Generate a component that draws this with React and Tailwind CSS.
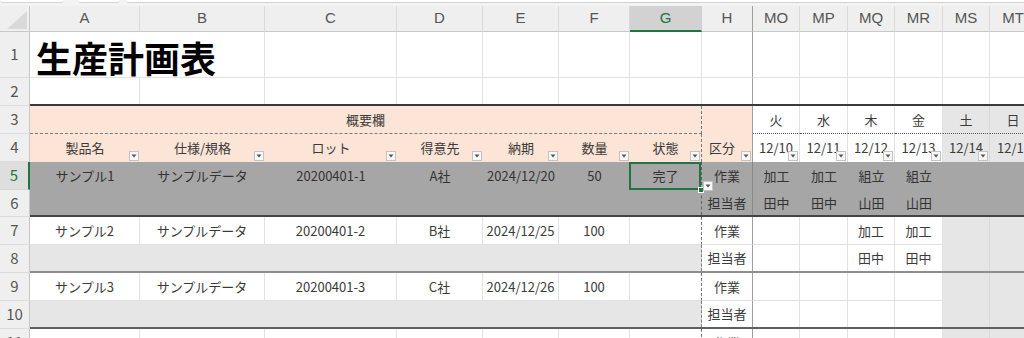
import React from "react";

// column widths, in sheet order
const W = {
  A: "w-[110px]",
  B: "w-[125px]",
  C: "w-[132px]",
  D: "w-[86px]",
  E: "w-[76px]",
  F: "w-[71px]",
  G: "w-[72px]",
  H: "w-[51px]",
  MO: "w-[47px]",
  MP: "w-[48px]",
  MQ: "w-[47px]",
  MR: "w-[48px]",
  MS: "w-[47px]",
  MT: "w-[47px]",
};

const LEFT = ["A", "B", "C", "D", "E", "F"];
const DAYS = ["MO", "MP", "MQ", "MR"];
const WEEKEND = ["MS", "MT"];

function Flt({ className = "right-[1px] bottom-[1px]" }) {
  return (
    <span
      className={`absolute z-20 flex h-[10px] w-[10px] items-center justify-center border border-[#c3c3c3] bg-[#f8f8f8] ${className}`}>
      <svg width="6" height="4" viewBox="0 0 6 4">
        <path d="M0.5 0.5h5L3 3.5z" fill="#555" />
      </svg>
    </span>
  );
}

function Cell({ col, className = "", children, flt }) {
  return (
    <div
      className={`relative flex h-full shrink-0 items-center justify-center whitespace-nowrap ${W[col]} ${className}`}>
      {children}
      {flt && <Flt />}
    </div>
  );
}

function RowNum({ n, active }) {
  return (
    <div
      className={
        active
          ? "flex w-[30px] shrink-0 items-center justify-center border-r-2 border-b border-r-[#217346] border-b-[#d6d6d6] bg-[#dedede] text-[15px] text-[#217346]"
          : "flex w-[30px] shrink-0 items-center justify-center border-r border-b border-r-[#c8c8c8] border-b-[#dcdcdc] bg-[#efefef] text-[15px] text-[#555]"
      }>
      {n}
    </div>
  );
}

function Row({ n, active, h = "h-[28px]", line = "", children }) {
  return (
    <div className={`flex ${h}`}>
      <RowNum n={n} active={active} />
      <div className={`flex min-w-0 flex-1 ${line}`}>{children}</div>
    </div>
  );
}

const grid = "border-r border-b border-[#e2e2e2]";
const gEdge = "border-r border-b border-b-[#e2e2e2] border-r-[#7a7a7a] [border-right-style:dashed]";
const hEdge = "border-r border-b border-b-[#e2e2e2] border-r-[#9e9e9e]";

function BlankRow({ n, h, line, title }) {
  return (
    <Row n={n} h={h} line={line}>
      {LEFT.map((c) =>
        c === "A" && title ? (
          <Cell key={c} col={c} className="z-10 items-end justify-start border-b border-[#e2e2e2] pb-[2px] pl-[6px]">
            <span className="text-[36px] leading-[36px] font-bold text-black">{title}</span>
          </Cell>
        ) : (
          <Cell key={c} col={c} className={line ? "border-r border-[#e2e2e2]" : grid} />
        )
      )}
      <Cell col="G" className={line ? "border-r border-[#e2e2e2]" : grid} />
      <Cell col="H" className={line ? "border-r border-[#9e9e9e]" : "border-r border-b border-b-[#e2e2e2] border-r-[#9e9e9e]"} />
      {[...DAYS, ...WEEKEND].map((c) => (
        <Cell key={c} col={c} className={line ? "border-r border-[#e2e2e2]" : grid} />
      ))}
    </Row>
  );
}

function DataPair({ n, vals, work, staff, line }) {
  return (
    <>
      <Row n={n}>
        {LEFT.map((c, i) => (
          <Cell key={c} col={c} className={grid}>
            {vals[i]}
          </Cell>
        ))}
        <Cell col="G" className={gEdge} />
        <Cell col="H" className={hEdge}>作業</Cell>
        {DAYS.map((c, i) => (
          <Cell key={c} col={c} className={grid}>
            {work[i]}
          </Cell>
        ))}
        {WEEKEND.map((c) => (
          <Cell key={c} col={c} className="border-r border-[#d8d8d8] bg-[#e7e6e6]" />
        ))}
      </Row>
      <Row n={n + 1} line={line}>
        {LEFT.map((c) => (
          <Cell key={c} col={c} className="bg-[#e7e6e6]" />
        ))}
        <Cell col="G" className="border-r border-[#7a7a7a] border-dashed bg-[#e7e6e6]" />
        <Cell col="H" className="border-r border-[#9e9e9e]">担当者</Cell>
        {DAYS.map((c, i) => (
          <Cell key={c} col={c} className="border-r border-[#e2e2e2]">
            {staff[i]}
          </Cell>
        ))}
        {WEEKEND.map((c) => (
          <Cell key={c} col={c} className="border-r border-[#d8d8d8] bg-[#e7e6e6]" />
        ))}
      </Row>
    </>
  );
}

export default function App() {
  const heads = ["A", "B", "C", "D", "E", "F", "G", "H", "MO", "MP", "MQ", "MR", "MS", "MT"];
  const labels = ["製品名", "仕様/規格", "ロット", "得意先", "納期", "数量"];
  const days = ["火", "水", "木", "金"];
  const dates = ["12/10", "12/11", "12/12", "12/13"];

  return (
    <div className="h-[338px] w-[1024px] overflow-hidden bg-white font-['Noto_Sans_CJK_JP',sans-serif] text-[13px] text-[#3b3b3b]">
      {/* remains of the formula bar */}
      <div className="flex h-[6px] gap-[14px] bg-[#f3f3f3]">
        <div className="h-[3px] w-[64px] rounded-b-[3px] border-b border-[#d2d2d2] bg-white" />
        <div className="-ml-[0px] h-[3px] w-[42px] rounded-b-[3px] border-b border-[#d2d2d2] bg-white" />
        <div className="-ml-[8px] h-[3px] flex-1 rounded-bl-[3px] border-b border-[#d2d2d2] bg-white" />
      </div>

      {/* column letters */}
      <div className="flex h-[26px] font-['Liberation_Sans',sans-serif] text-[15px] text-[#555]">
        <div className="relative w-[30px] shrink-0 border-r border-b border-[#c8c8c8] bg-[#efefef]">
          <svg className="absolute right-[2px] bottom-[2px]" width="20" height="18" viewBox="0 0 20 18">
            <path d="M20 0V18H0z" fill="#d9d9d9" />
          </svg>
        </div>
        {heads.map((c) => (
          <Cell
            key={c}
            col={c}
            className={
              c === "G"
                ? "border-r border-b-2 border-r-[#d0d0d0] border-b-[#217346] bg-[#d2d2d2] text-[#217346]"
                : c === "H"
                ? "border-r border-b border-r-[#9e9e9e] border-b-[#c8c8c8] bg-[#efefef]"
                : "border-r border-b border-r-[#dadada] border-b-[#c8c8c8] bg-[#efefef]"
            }>
            {c}
          </Cell>
        ))}
      </div>

      <BlankRow n={1} h="h-[46px]" title="生産計画表" />
      <BlankRow n={2} line="border-b-2 border-[#3a3a3a]" />

      {/* row 3: group heading and weekdays */}
      <Row n={3}>
        <div className="flex h-full w-[672px] shrink-0 items-center justify-center border-r border-b border-dashed border-[#7a7a7a] bg-[#fce4d6]">
          概要欄
        </div>
        <Cell col="H" className="border-r border-[#9e9e9e] bg-[#fce4d6]" />
        {DAYS.map((c, i) => (
          <Cell key={c} col={c} className="border-r border-b border-r-[#e2e2e2] border-b-[#555] [border-bottom-style:dotted]">
            {days[i]}
          </Cell>
        ))}
        <Cell col="MS" className="border-r border-b border-r-[#d8d8d8] border-b-[#555] bg-[#e7e6e6] [border-bottom-style:dotted]">
          土
        </Cell>
        <Cell col="MT" className="border-r border-b border-r-[#d8d8d8] border-b-[#555] bg-[#e7e6e6] [border-bottom-style:dotted]">
          日
        </Cell>
      </Row>

      {/* row 4: field names with filters */}
      <Row n={4}>
        {LEFT.map((c, i) => (
          <Cell key={c} col={c} className="bg-[#fce4d6]" flt>
            {labels[i]}
          </Cell>
        ))}
        <Cell col="G" className="border-r border-dashed border-[#7a7a7a] bg-[#fce4d6]" flt>
          状態
        </Cell>
        <Cell col="H" className="justify-start border-r border-[#9e9e9e] bg-[#fce4d6] pl-[7px]" flt>
          区分
        </Cell>
        {DAYS.map((c, i) => (
          <Cell key={c} col={c} className="border-r border-[#e2e2e2]" flt>
            {dates[i]}
          </Cell>
        ))}
        <Cell col="MS" className="border-r border-[#d8d8d8] bg-[#e7e6e6]" flt>
          12/14
        </Cell>
        <Cell col="MT" className="justify-start border-r border-[#d8d8d8] bg-[#e7e6e6] pl-[7px]" flt>
          12/15
        </Cell>
      </Row>

      {/* rows 5-6: highlighted product */}
      <Row n={5} active>
        {["サンプル1", "サンプルデータ", "20200401-1", "A社", "2024/12/20", "50"].map((v, i) => (
          <Cell key={LEFT[i]} col={LEFT[i]} className="bg-[#a6a6a6] text-[#333]">
            {v}
          </Cell>
        ))}
        <Cell col="G" className="z-10 border-r border-dashed border-[#5e5e5e] bg-[#a6a6a6] text-[#333]">
          完了
          <span className="absolute inset-y-0 -left-px right-0 border-2 border-[#217346]" />
          <span className="absolute -right-[3px] -bottom-[3px] h-[6px] w-[6px] border border-white bg-[#217346]" />
          <Flt className="top-[19px] left-[73px] h-[9px] w-[9px]" />
        </Cell>
        <Cell col="H" className="border-r border-[#8a8a8a] bg-[#a6a6a6] text-[#333]">
          作業
        </Cell>
        {["加工", "加工", "組立", "組立"].map((v, i) => (
          <Cell key={DAYS[i]} col={DAYS[i]} className="bg-[#a6a6a6] text-[#333]">
            {v}
          </Cell>
        ))}
        {WEEKEND.map((c) => (
          <Cell key={c} col={c} className="bg-[#a6a6a6]" />
        ))}
      </Row>
      <Row n={6} h="h-[27px]" line="border-b-2 border-[#444]">
        {LEFT.map((c) => (
          <Cell key={c} col={c} className="bg-[#a6a6a6]" />
        ))}
        <Cell col="G" className="border-r border-dashed border-[#5e5e5e] bg-[#a6a6a6]" />
        <Cell col="H" className="border-r border-[#8a8a8a] bg-[#a6a6a6] text-[#333]">
          担当者
        </Cell>
        {["田中", "田中", "山田", "山田"].map((v, i) => (
          <Cell key={DAYS[i]} col={DAYS[i]} className="bg-[#a6a6a6] text-[#333]">
            {v}
          </Cell>
        ))}
        {WEEKEND.map((c) => (
          <Cell key={c} col={c} className="bg-[#a6a6a6]" />
        ))}
      </Row>

      <DataPair
        n={7}
        vals={["サンプル2", "サンプルデータ", "20200401-2", "B社", "2024/12/25", "100"]}
        work={["", "", "加工", "加工"]}
        staff={["", "", "田中", "田中"]}
        line="border-b-2 border-[#8e8e8e]"
      />
      <DataPair
        n={9}
        vals={["サンプル3", "サンプルデータ", "20200401-3", "C社", "2024/12/26", "100"]}
        work={["", "", "", ""]}
        staff={["", "", "", ""]}
        line="border-b-2 border-[#606060]"
      />

      <Row n={11}>
        {LEFT.map((c) => (
          <Cell key={c} col={c} className={grid} />
        ))}
        <Cell col="G" className={gEdge} />
        <Cell col="H" className={hEdge}>作業</Cell>
        {DAYS.map((c) => (
          <Cell key={c} col={c} className={grid} />
        ))}
        {WEEKEND.map((c) => (
          <Cell key={c} col={c} className="border-r border-[#d8d8d8] bg-[#e7e6e6]" />
        ))}
      </Row>
    </div>
  );
}
